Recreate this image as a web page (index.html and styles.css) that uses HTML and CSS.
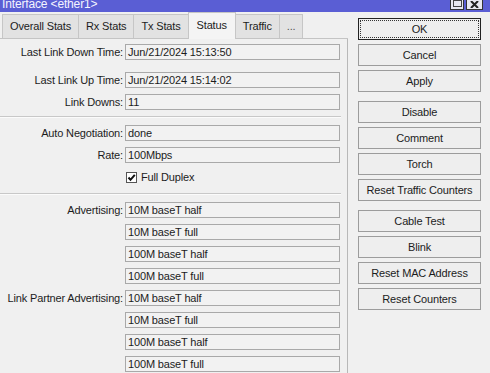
FILE: index.html
```html
<!DOCTYPE html>
<html lang="en">
<head>
    <meta charset="UTF-8">
    <meta name="viewport" content="width=device-width, initial-scale=1.0">
    <title>Interface &lt;ether1&gt;</title>
    <link rel="stylesheet" href="styles.css">
</head>
<body>
    <div class="window">
        <div class="titlebar">
            <span class="title">Interface &lt;ether1&gt;</span>
            <div class="win-buttons">
                <span class="win-btn"><span class="max-box"></span></span>
                <span class="win-btn close">
                    <svg width="9" height="7" viewBox="0 0 9 7"><path d="M1 0 L8 7 M8 0 L1 7" stroke="#222" stroke-width="2"/></svg>
                </span>
            </div>
        </div>
        <div class="content">
            <div class="main">
                <div class="tabs">
                    <div class="tab">Overall Stats</div>
                    <div class="tab">Rx Stats</div>
                    <div class="tab">Tx Stats</div>
                    <div class="tab active">Status</div>
                    <div class="tab">Traffic</div>
                    <div class="tab more">...</div>
                </div>
                <div class="panel">
                    <div class="row first">
                        <label>Last Link Down Time:</label>
                        <div class="field">Jun/21/2024 15:13:50</div>
                    </div>
                    <div class="row">
                        <label>Last Link Up Time:</label>
                        <div class="field">Jun/21/2024 15:14:02</div>
                    </div>
                    <div class="row">
                        <label>Link Downs:</label>
                        <div class="field">11</div>
                    </div>
                    <div class="separator"></div>
                    <div class="row">
                        <label>Auto Negotiation:</label>
                        <div class="field">done</div>
                    </div>
                    <div class="row">
                        <label>Rate:</label>
                        <div class="field">100Mbps</div>
                    </div>
                    <div class="row check-row">
                        <label></label>
                        <span class="checkbox">
                            <svg width="9" height="9" viewBox="0 0 9 9"><path d="M1.5 4.5 L3.5 6.8 L7.8 1.8" fill="none" stroke="#111" stroke-width="2"/></svg>
                        </span>
                        <span class="check-label">Full Duplex</span>
                    </div>
                    <div class="separator"></div>
                    <div class="row">
                        <label>Advertising:</label>
                        <div class="field">10M baseT half</div>
                    </div>
                    <div class="row">
                        <label></label>
                        <div class="field">10M baseT full</div>
                    </div>
                    <div class="row">
                        <label></label>
                        <div class="field">100M baseT half</div>
                    </div>
                    <div class="row">
                        <label></label>
                        <div class="field">100M baseT full</div>
                    </div>
                    <div class="row">
                        <label>Link Partner Advertising:</label>
                        <div class="field">10M baseT half</div>
                    </div>
                    <div class="row">
                        <label></label>
                        <div class="field">10M baseT full</div>
                    </div>
                    <div class="row">
                        <label></label>
                        <div class="field">100M baseT half</div>
                    </div>
                    <div class="row">
                        <label></label>
                        <div class="field">100M baseT full</div>
                    </div>
                </div>
            </div>
            <div class="actions">
                <div class="btn-group">
                    <button class="default"><span>OK</span></button>
                    <button>Cancel</button>
                    <button>Apply</button>
                </div>
                <div class="btn-group">
                    <button>Disable</button>
                    <button>Comment</button>
                    <button>Torch</button>
                    <button>Reset Traffic Counters</button>
                </div>
                <div class="btn-group">
                    <button>Cable Test</button>
                    <button>Blink</button>
                    <button>Reset MAC Address</button>
                    <button>Reset Counters</button>
                </div>
            </div>
        </div>
    </div>
</body>
</html>
```

FILE: styles.css
```css
body {
    margin: 0;
    font-family: 'Liberation Sans', Arial, sans-serif;
    font-size: 11px;
    letter-spacing: -0.15px;
    color: #1c1c1c;
    background-color: #f0f0f0;
    overflow: hidden;
}
.window {
    width: 490px;
    height: 373px;
    background-color: #f0f0f0;
}
.titlebar {
    height: 12px;
    background-color: #5a5ed4;
    display: flex;
    justify-content: space-between;
    overflow: hidden;
}
.title {
    color: #f4f4ff;
    font-size: 12px;
    line-height: 12px;
    margin-top: -2px;
    padding-left: 2px;
}
.win-buttons {
    display: flex;
    gap: 2px;
    padding-right: 7px;
}
.win-btn {
    width: 12px;
    height: 9px;
    background-color: #e8e8f0;
    border: 1px solid #333;
    border-top: none;
    display: flex;
    align-items: center;
    justify-content: center;
}
.win-btn.close {
    width: 15px;
}
.max-box {
    width: 7px;
    height: 5px;
    border: 1px solid #444;
    border-top-width: 2px;
    margin-top: -3px;
}
.content {
    display: flex;
}
.main {
    width: 348px;
}
.tabs {
    height: 26px;
    display: flex;
    align-items: flex-end;
    padding-left: 2px;
    border-bottom: 1px solid #c4c4c4;
}
.tab {
    height: 23px;
    line-height: 23px;
    padding: 0 7px;
    background-color: #e2e2e2;
    border: 1px solid #c6c6c6;
    border-bottom: none;
    margin-right: -1px;
}
.tab.active {
    height: 26px;
    line-height: 24px;
    background-color: #f4f4f4;
    margin-bottom: -1px;
    position: relative;
    padding: 0 8px;
}
.tab.more {
    padding: 0 7px;
    color: #555;
}
.panel {
    border-right: 1px solid #b8b8b8;
    height: 334px;
    padding-top: 5px;
}
.row {
    display: flex;
    align-items: center;
    height: 16px;
    margin-bottom: 6px;
}
.row.first {
    margin-bottom: 12px;
}
.row label {
    width: 123px;
    text-align: right;
    flex-shrink: 0;
    margin-right: 2px;
}
.field {
    width: 215px;
    height: 16px;
    box-sizing: border-box;
    border: 1px solid #a9a9a9;
    background-color: #f2f2f2;
    line-height: 14px;
    padding-left: 2px;
    white-space: nowrap;
}
.check-row {
    margin-top: 4px;
    margin-bottom: 8px;
}
.checkbox {
    width: 11px;
    height: 11px;
    box-sizing: border-box;
    border: 1px solid #555;
    background-color: #fff;
    margin-left: 1px;
    margin-right: 4px;
    display: flex;
    align-items: center;
    justify-content: center;
}
.separator {
    height: 0;
    border-top: 1px solid #c8c8c8;
    border-bottom: 1px solid #fbfbfb;
    width: 341px;
    margin: 1px 0 7px;
}
.actions {
    padding: 6px 0 0 10px;
    display: flex;
    flex-direction: column;
    gap: 9px;
}
.btn-group {
    display: flex;
    flex-direction: column;
    gap: 4px;
}
button {
    width: 123px;
    height: 22px;
    padding: 0;
    font-family: inherit;
    font-size: 11px;
    letter-spacing: -0.15px;
    color: #1c1c1c;
    background-color: #eeeeee;
    border: 1px solid #9c9c9c;
}
button.default {
    border: 1px solid #222;
    padding: 1px;
}
button.default span {
    display: block;
    height: 100%;
    box-sizing: border-box;
    border: 1px dotted #333;
    line-height: 16px;
}
```
